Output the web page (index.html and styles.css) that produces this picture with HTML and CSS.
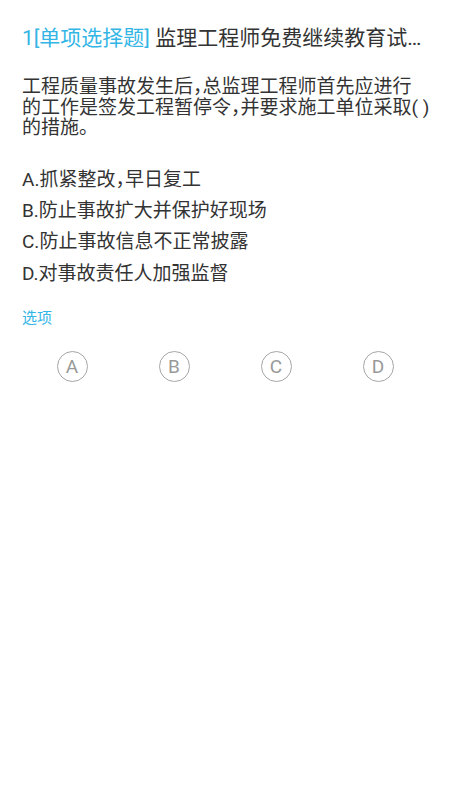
FILE: index.html
```html
<!DOCTYPE html>
<html lang="zh-CN">
<head>
  <meta charset="UTF-8" />
  <title>单项选择题</title>
  <meta name="viewport" content="width=device-width, initial-scale=1.0" />
  <link rel="stylesheet" href="styles.css">
</head>
<body>
  <div class="page">
    <h1 class="title"><span class="tag">1[单项选择题]</span> 监理工程师免费继续教育试卷</h1>

    <p class="question">工程质量事故发生后，总监理工程师首先应进行的工作是签发工程暂停令，并要求施工单位采取( )的措施。</p>

    <ul class="options">
      <li>A.抓紧整改，早日复工</li>
      <li>B.防止事故扩大并保护好现场</li>
      <li>C.防止事故信息不正常披露</li>
      <li>D.对事故责任人加强监督</li>
    </ul>

    <div class="label">选项</div>

    <div class="choices">
      <div class="choice"><span class="circle">A</span></div>
      <div class="choice"><span class="circle">B</span></div>
      <div class="choice"><span class="circle">C</span></div>
      <div class="choice"><span class="circle">D</span></div>
    </div>
  </div>
</body>
</html>
```

FILE: styles.css
```css
body {
  margin: 0;
  background: #fff;
  font-family: Roboto, "Noto Sans CJK SC", sans-serif;
  color: #333;
}

.page {
  padding: 24px 0 0 22px;
}

.title {
  margin: 0 22px 0 0;
  font-size: 21px;
  font-weight: normal;
  line-height: 28px;
  white-space: nowrap;
  overflow: hidden;
  text-overflow: ellipsis;
}

.tag {
  color: #33b5e5;
}

.question {
  width: 407.5px;
  margin: 25px 0 0 0;
  font-size: 19px;
  line-height: 20.5px;
  font-feature-settings: "halt";
}

.options {
  list-style: none;
  margin: 25px 0 0 0;
  padding: 0;
}

.options li {
  font-size: 19px;
  line-height: 31.4px;
  font-feature-settings: "halt";
}

.label {
  margin-top: 19px;
  font-size: 15px;
  line-height: 20px;
  color: #33b5e5;
}

.choices {
  display: grid;
  grid-template-columns: repeat(4, 1fr);
  width: 408px;
  margin: 23px 0 0 -1px;
}

.choice {
  display: flex;
  justify-content: center;
}

.circle {
  width: 29px;
  height: 29px;
  border: 1.5px solid #a6a6a6;
  border-radius: 50%;
  display: flex;
  align-items: center;
  justify-content: center;
  font-size: 19px;
  color: #999;
}
```
